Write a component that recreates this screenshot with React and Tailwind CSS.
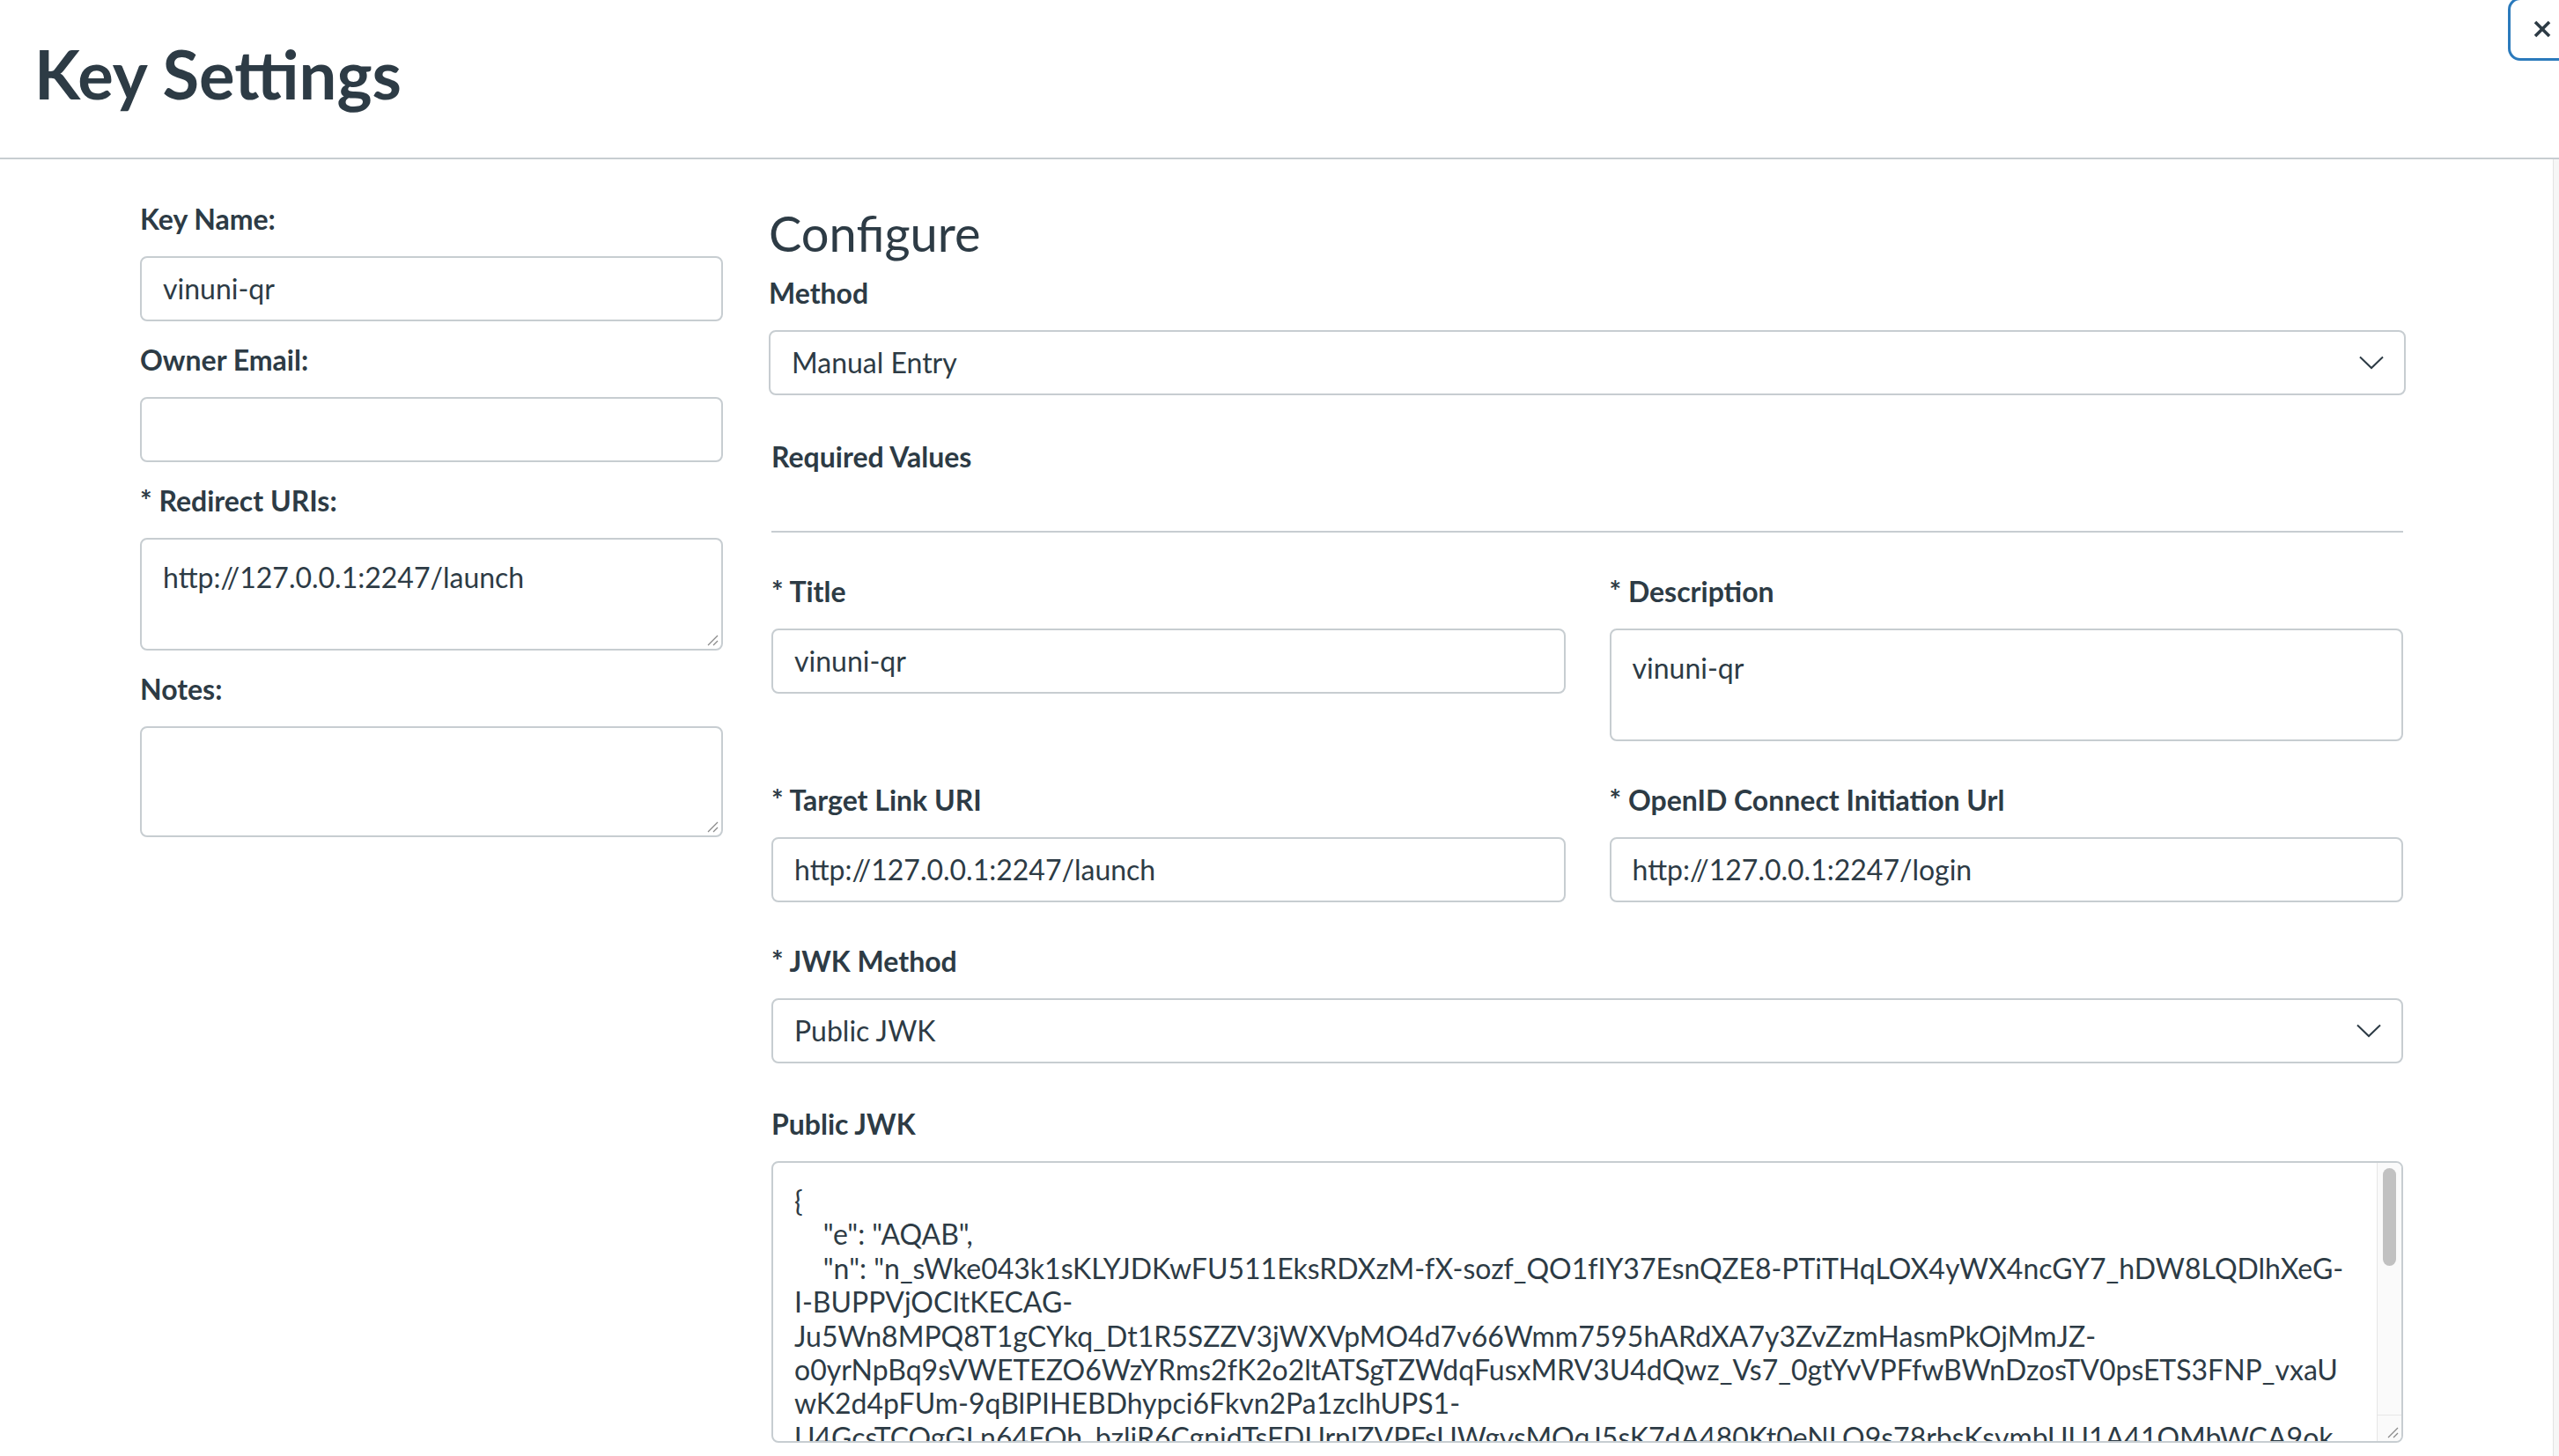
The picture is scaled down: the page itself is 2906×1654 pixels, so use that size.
import React from "react";

const jwkLines = [
  "{",
  '    "e": "AQAB",',
  '    "n": "n_sWke043k1sKLYJDKwFU511EksRDXzM-fX-sozf_QO1fIY37EsnQZE8-PTiTHqLOX4yWX4ncGY7_hDW8LQDlhXeG-',
  "I-BUPPVjOCItKECAG-",
  "Ju5Wn8MPQ8T1gCYkq_Dt1R5SZZV3jWXVpMO4d7v66Wmm7595hARdXA7y3ZvZzmHasmPkOjMmJZ-",
  "o0yrNpBq9sVWETEZO6WzYRms2fK2o2ltATSgTZWdqFusxMRV3U4dQwz_Vs7_0gtYvVPFfwBWnDzosTV0psETS3FNP_vxaU",
  "wK2d4pFUm-9qBlPIHEBDhypci6Fkvn2Pa1zclhUPS1-",
  "U4GcsTCOgGLn64FOh_bzliR6CgnidTsFDUrnlZVPFsUWgvsMOqJ5sK7dA480Kt0eNLO9s78rbsKsvmbUU1A41OMbWCA9ok",
];

function Label({ children }) {
  return (
    <div className="h-[48px] leading-[48px] text-[32px] font-bold mb-[18px] whitespace-nowrap">
      {children}
    </div>
  );
}

function TextBox({ value }) {
  return (
    <div className="h-[74px] border-2 border-[#C7CDD1] rounded-[8px] px-[24px] flex items-center text-[32px] bg-white">
      {value}
    </div>
  );
}

function ResizeGrip() {
  return (
    <svg
      className="absolute right-[3px] bottom-[3px]"
      width="14"
      height="14"
      viewBox="0 0 14 14"
    >
      <line x1="13" y1="2" x2="2" y2="13" stroke="#8a8a8a" strokeWidth="1.3" />
      <line x1="13" y1="8" x2="8" y2="13" stroke="#8a8a8a" strokeWidth="1.3" />
    </svg>
  );
}

function TextArea({ value, height, grip = true }) {
  return (
    <div
      className={`relative border-2 border-[#C7CDD1] rounded-[8px] px-[24px] pt-[19px] text-[32px] leading-[48px] bg-white ${height}`}
    >
      {value}
      {grip && <ResizeGrip />}
    </div>
  );
}

function Chevron() {
  return (
    <svg width="28" height="16" viewBox="0 0 28 16" fill="none">
      <polyline
        points="1,1.5 14,14 27,1.5"
        stroke="#2D3B45"
        strokeWidth="2"
        fill="none"
      />
    </svg>
  );
}

function Select({ value }) {
  return (
    <div className="h-[74px] border-2 border-[#C7CDD1] rounded-[8px] pl-[24px] pr-[23px] flex items-center justify-between text-[32px] bg-white">
      <span>{value}</span>
      <Chevron />
    </div>
  );
}

export default function App() {
  return (
    <div className="relative w-[2906px] h-[1654px] overflow-hidden bg-white text-[#2D3B45] font-['Lato','Noto_Sans',sans-serif]">
      {/* header */}
      <div className="h-[181px] border-b-2 border-[#C7CDD1] pl-[39px] pt-[46px]">
        <h1 className="text-[76px] leading-[76px] font-bold">Key Settings</h1>
      </div>

      <button className="absolute left-[2848px] top-[-3px] w-[78px] h-[72px] border-[3px] border-[#2B7ABC] rounded-[14px] flex items-center justify-center bg-white">
        <svg width="20" height="20" viewBox="0 0 20 20">
          <line x1="2" y1="2" x2="18" y2="18" stroke="#2D3B45" strokeWidth="3.6" />
          <line x1="18" y1="2" x2="2" y2="18" stroke="#2D3B45" strokeWidth="3.6" />
        </svg>
      </button>

      {/* modal body scrollbar track */}
      <div className="absolute left-[2899px] top-[181px] bottom-0 w-[7px] border-l border-[#e3e3e3] bg-[#f6f6f6]" />

      <div className="flex pl-[159px]">
        {/* left column */}
        <div className="w-[662px] pt-[44px] flex flex-col gap-[20px]">
          <div>
            <Label>Key Name:</Label>
            <TextBox value="vinuni-qr" />
          </div>
          <div>
            <Label>Owner Email:</Label>
            <TextBox value="" />
          </div>
          <div>
            <Label>* Redirect URIs:</Label>
            <TextArea value="http://127.0.0.1:2247/launch" height="h-[128px]" />
          </div>
          <div>
            <Label>Notes:</Label>
            <TextArea value="" height="h-[126px]" />
          </div>
        </div>

        {/* right column */}
        <div className="ml-[52px] w-[1859px] pt-[56px]">
          <h2 className="text-[56px] leading-[56px] font-normal mb-[16px]">Configure</h2>
          <Label>Method</Label>
          <Select value="Manual Entry" />

          <div className="mx-[3px] mt-[46px]">
            <div className="h-[48px] leading-[48px] text-[32px] font-bold">Required Values</div>
            <div className="mt-[60px] border-t-2 border-[#C7CDD1]" />

            <div className="grid grid-cols-2 gap-x-[50px] gap-y-[43px] mt-[43px] items-start">
              <div>
                <Label>* Title</Label>
                <TextBox value="vinuni-qr" />
              </div>
              <div>
                <Label>* Description</Label>
                <TextArea value="vinuni-qr" height="h-[128px]" grip={false} />
              </div>
              <div>
                <Label>* Target Link URI</Label>
                <TextBox value="http://127.0.0.1:2247/launch" />
              </div>
              <div>
                <Label>* OpenID Connect Initiation Url</Label>
                <TextBox value="http://127.0.0.1:2247/login" />
              </div>
            </div>

            <div className="mt-[43px]">
              <Label>* JWK Method</Label>
              <Select value="Public JWK" />
            </div>

            <div className="mt-[45px]">
              <Label>Public JWK</Label>
              <div className="relative h-[320px] border-2 border-[#C7CDD1] rounded-[8px] overflow-hidden bg-white">
                <div className="pl-[24px] pr-[60px] pt-[24px] text-[32px] leading-[38.4px] whitespace-pre">
                  {jwkLines.map((line, i) => (
                    <div key={i}>{line}</div>
                  ))}
                </div>
                {/* textarea scrollbar */}
                <div className="absolute right-0 top-0 bottom-0 w-[28px] border-l border-[#e6e6e6] bg-[#fafafa] flex flex-col">
                  <div className="flex-1 pt-[6px] flex justify-center">
                    <div className="w-[15px] h-[111px] rounded-full bg-[#c1c1c1]" />
                  </div>
                  <div className="h-[30px] border-t border-[#e6e6e6]" />
                </div>
                <ResizeGrip />
              </div>
            </div>
          </div>
        </div>
      </div>
    </div>
  );
}
